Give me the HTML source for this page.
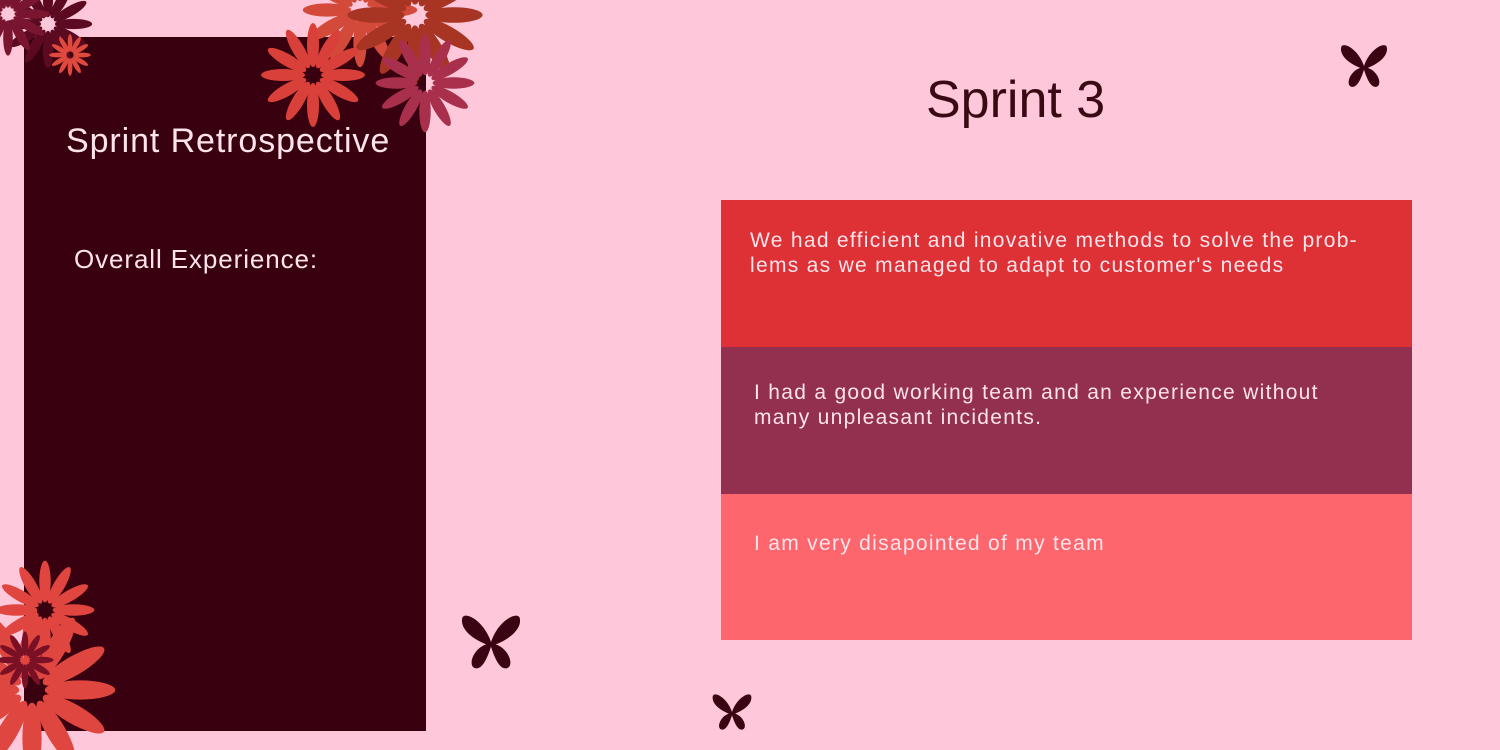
<!DOCTYPE html>
<html><head><meta charset="utf-8"><style>
body{margin:0;width:1500px;height:750px;background:#fec8da;position:relative;overflow:hidden;font-family:"Century Gothic","Liberation Sans",sans-serif;}
.panel{position:absolute;left:24px;top:37px;width:402px;height:694px;background:#39010f;}
.t1{position:absolute;left:66px;top:122px;color:#fde3ea;font-size:34px;letter-spacing:0.9px;}
.t2{position:absolute;left:74px;top:244px;color:#fde3ea;font-size:26px;letter-spacing:0.9px;}
.h{position:absolute;left:926px;top:70px;color:#3a0a14;font-size:52px;}
.box{position:absolute;left:721px;width:691px;height:147px;color:#fde3ea;font-size:21px;line-height:25px;box-sizing:border-box;letter-spacing:1.3px;white-space:nowrap;}
svg{position:absolute;left:0;top:0}
</style></head><body>
<div class="panel"></div>
<svg width="1500" height="750">
<defs>
<g id="f">
<ellipse cx="0" cy="-30" rx="6" ry="22"/>
<ellipse cx="0" cy="-30" rx="6" ry="22" transform="rotate(30)"/>
<ellipse cx="0" cy="-30" rx="6" ry="22" transform="rotate(60)"/>
<ellipse cx="0" cy="-30" rx="6" ry="22" transform="rotate(90)"/>
<ellipse cx="0" cy="-30" rx="6" ry="22" transform="rotate(120)"/>
<ellipse cx="0" cy="-30" rx="6" ry="22" transform="rotate(150)"/>
<ellipse cx="0" cy="-30" rx="6" ry="22" transform="rotate(180)"/>
<ellipse cx="0" cy="-30" rx="6" ry="22" transform="rotate(210)"/>
<ellipse cx="0" cy="-30" rx="6" ry="22" transform="rotate(240)"/>
<ellipse cx="0" cy="-30" rx="6" ry="22" transform="rotate(270)"/>
<ellipse cx="0" cy="-30" rx="6" ry="22" transform="rotate(300)"/>
<ellipse cx="0" cy="-30" rx="6" ry="22" transform="rotate(330)"/>
</g>
<path id="b" d="M0 0 C-6 -18 -22 -26 -24 -20 C-26 -10 -14 -2 -4 2 C-16 6 -20 22 -12 22 C-6 22 -2 10 0 4 C2 10 6 22 12 22 C20 22 16 6 4 2 C14 -2 26 -10 24 -20 C22 -26 6 -18 0 0Z"/>
</defs>
<use href="#f" fill="#5c0a22" transform="translate(48,24) scale(0.85)"/>
<use href="#f" fill="#7a1530" transform="translate(8,14) scale(0.8)"/>
<use href="#f" fill="#e04a3e" transform="translate(70,55) scale(0.4)"/>
<use href="#f" fill="#d44a3a" transform="translate(360,10) scale(1.1)"/>
<use href="#f" fill="#a83524" transform="translate(415,15) scale(1.3)"/>
<use href="#f" fill="#a8304c" transform="translate(425,83) scale(0.95)"/>
<use href="#f" fill="#d9403a" transform="translate(313,75) scale(1.0)"/>
<use href="#f" fill="#e0463f" transform="translate(45,610) scale(0.95)"/>
<use href="#f" fill="#e04640" transform="translate(32,690) scale(1.6)"/>
<use href="#f" fill="#7a1026" transform="translate(25,660) scale(0.55)"/>
<use href="#b" fill="#3a0412" transform="translate(1364,66) scale(0.95)"/>
<use href="#b" fill="#3a0412" transform="translate(491,642) scale(1.2)"/>
<use href="#b" fill="#3a0412" transform="translate(732,712) scale(0.8)"/>
</svg>
<div class="t1">Sprint Retrospective</div>
<div class="t2">Overall Experience:</div>
<div class="h">Sprint 3</div>
<div class="box" style="top:200px;background:#dd3136;padding:28px 10px 0 29px;">We had efficient and inovative methods to solve the prob-<br>lems as we managed to adapt to customer's needs</div>
<div class="box" style="top:347px;background:#93304f;padding:33px 10px 0 33px;">I had a good working team and an experience without<br>many unpleasant incidents.</div>
<div class="box" style="top:494px;height:146px;background:#fe666d;padding:37px 10px 0 33px;">I am very disapointed of my team</div>
</body></html>
